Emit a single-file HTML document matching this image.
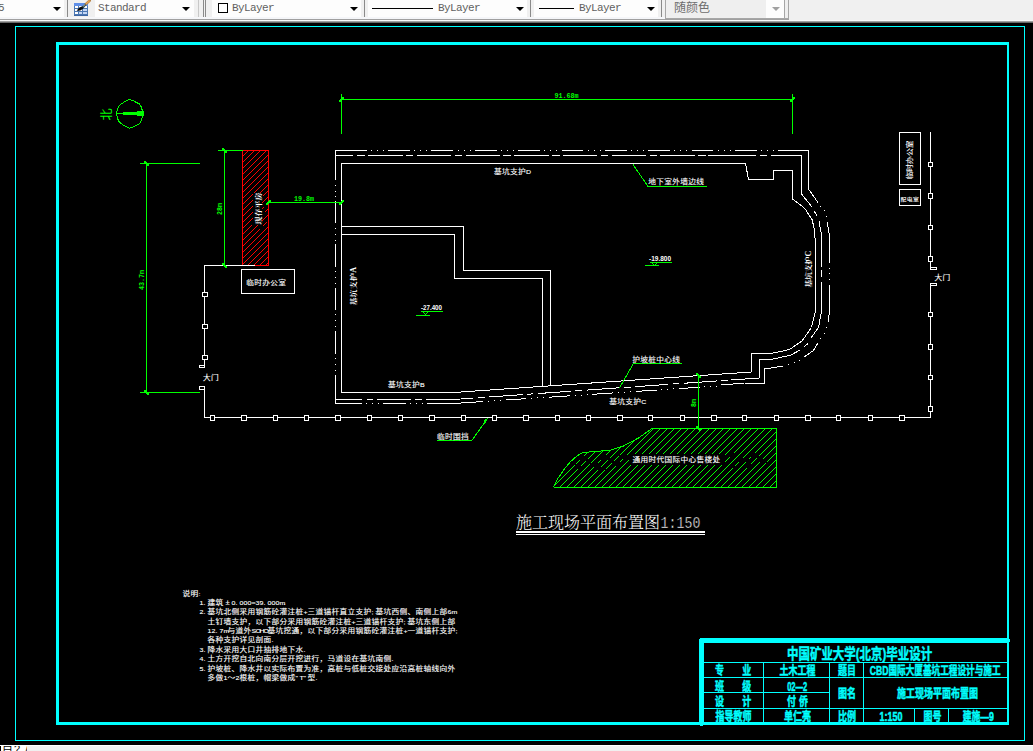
<!DOCTYPE html>
<html lang="zh-CN">
<head>
<meta charset="utf-8">
<title>施工现场平面布置图</title>
<style>
html,body{margin:0;padding:0}
body{width:1033px;height:751px;overflow:hidden;background:#f0f0f0;position:relative;
 font-family:"Liberation Sans","Noto Sans CJK SC",sans-serif}
#toolbar{position:absolute;left:0;top:0;width:1033px;height:23px;background:#f0f0f0;overflow:hidden}
#toolbar .edge{position:absolute;left:0;width:1033px;height:1px}
.combo{position:absolute;top:-3px;height:20px;background:#fdfdfd;box-sizing:border-box;overflow:hidden}
.combo .lbl{position:absolute;top:4px;font:11px/14px "Liberation Mono","Noto Sans CJK SC",monospace;color:#606060;letter-spacing:-.6px;white-space:nowrap}
.combo .arr{position:absolute;top:10px;width:0;height:0;border-left:4px solid transparent;border-right:4px solid transparent;border-top:4px solid #000}
.combo .smp{position:absolute;top:11px;height:1px;background:#000}
.combo .sw{position:absolute;top:6px;left:6px;width:8px;height:8px;border:1px solid #000;background:#fff}
.combo.dis{background:#efefef;border:1px solid #a6a6a6;border-top:0;top:-3px;height:22px}
.combo.dis .lbl{font:12px/14px "Liberation Sans","Noto Sans CJK SC",sans-serif;color:#6d6d6d;letter-spacing:0;top:4px}
.combo.dis .btn{position:absolute;right:3px;top:0;width:18px;height:21px;background:#fdfdfd;border-right:1px solid #a6a6a6}
.combo.dis .arr{border-top-color:#a0a0a0;border-left-width:4px;border-right-width:4px}
.sep{position:absolute;top:0;width:1px;height:17px;background:#8a8a8a}
.sep.l{background:#c8c8c8}
#icon{position:absolute;left:73px;top:0}
#cad{position:absolute;left:0;top:0;width:1033px;height:751px;display:block}
#status{position:absolute;left:0;top:745px;width:1033px;height:6px;background:#f0f0f0;border-top:1px solid #fff;box-sizing:border-box;overflow:hidden}
#status .cmd{position:absolute;left:0;top:0;width:27px;height:6px;background:#fff;overflow:hidden}
#status .cmd span{position:absolute;left:2px;top:-3px;font:11px/12px "Liberation Sans","Noto Sans CJK SC",sans-serif;color:#000;white-space:nowrap;letter-spacing:1px}
#status .cmd:before{content:"";position:absolute;left:0;top:0;width:1px;height:6px;background:#000}
svg .cy rect{fill:#0ff}
svg .wh rect{fill:#fff}
svg .gr rect{fill:#0f0}
svg .rd rect{fill:#f00}
svg .wh .sq,svg .wh .ln{fill:none;stroke:#fff;stroke-width:1}
svg .wh .sq{fill:#000}
svg .rd .mk,svg .gr .mk rect{fill:#000}
svg .pf{stroke:none}
svg .gr .sq,svg .gr .ln{fill:none;stroke:#0f0;stroke-width:1}
svg .rd .sq,svg .rd .ln{fill:none;stroke:#f00;stroke-width:1}
svg .gr .tk{fill:#0f0;stroke:none}
svg text{white-space:pre}
.tw{fill:#fff}
.t8{font:7.7px "Liberation Sans","Noto Sans CJK SC",sans-serif;stroke:#fff;stroke-width:.12px}
.t8 .a{font-size:7px}
.t6{font:5.8px "Liberation Sans","Noto Sans CJK SC",sans-serif}
.ts{font:bold 8px "Liberation Serif","Noto Serif CJK SC",serif}
.tn{font:bold 7.5px "Liberation Sans","Noto Sans CJK SC",sans-serif}
.tg{fill:#0f0;font:bold 7px "Liberation Mono","Noto Sans CJK SC",monospace}
.tg .nb{font:12px "Liberation Sans","Noto Sans CJK SC",sans-serif}
.ttl{font:16px "Liberation Mono","Noto Serif CJK SC",serif;font-weight:300}
.ttl .ttn{font-size:17px;font-weight:400;stroke:#000;stroke-width:.45px;paint-order:fill stroke}
.tc{fill:#0ff;stroke:#0ff;stroke-width:.45px;font-weight:bold;font-family:"Liberation Sans","Noto Sans CJK SC",sans-serif}
.c15{font-size:15px}
.c12{font-size:12px}
</style>
</head>
<body>
<div id="toolbar">
 <div class="edge" style="top:17px;height:2px;width:789px;background:#f5f6f9"></div>
 <div class="combo" style="left:0;width:64px"><span class="lbl" style="left:-2px">5</span><span class="arr" style="left:53px"></span></div>
 <div class="sep" style="left:67px"></div>
 <svg id="icon" width="18" height="17" viewBox="0 0 18 17" shape-rendering="crispEdges">
  <rect x="1" y="3" width="14" height="13" fill="#4b77b3"/><rect x="1" y="15" width="14" height="1" fill="#3c66a4"/>
  <rect x="1" y="3" width="14" height="3" fill="#5f8fe8"/>
  <g fill="#fff"><rect x="2" y="6" width="3" height="2"/><rect x="6" y="6" width="3" height="2"/><rect x="10" y="6" width="4" height="2"/>
  <rect x="2" y="9" width="3" height="2"/><rect x="6" y="9" width="3" height="2"/><rect x="10" y="9" width="4" height="2" fill="#c4d6f4"/>
  <rect x="2" y="12" width="3" height="2"/><rect x="6" y="12" width="3" height="2" fill="#c4d6f4"/><rect x="10" y="12" width="4" height="2" fill="#c4d6f4"/></g>
  <g shape-rendering="auto"><path d="M3.6 10.8 L6.3 7.4 L9.4 6.3 L10.4 8.6 L7.4 10.6 Z" fill="#0a0a0a"/><path d="M9.2 6.4 L12 3.6 L13.3 5 L10.4 8.4Z" fill="#38473f"/><path d="M10.2 6.2 L12.2 4.4" stroke="#e8f0ea" stroke-width=".7" fill="none"/><path d="M12 3.6 L15.8 0 L17.8 0 L17.8 1 L13.3 5Z" fill="#e9a552" stroke="#8a5a24" stroke-width=".5"/></g>
 </svg>
 <div class="combo" style="left:95px;width:99px"><span class="lbl" style="left:3px">Standard</span><span class="arr" style="left:87px"></span></div>
 <div class="sep l" style="left:198px"></div><div class="sep" style="left:203px"></div><div class="sep" style="left:205px"></div>
 <div class="combo" style="left:212px;width:149px"><span class="sw"></span><span class="lbl" style="left:20px">ByLayer</span><span class="arr" style="left:138px"></span></div>
 <div class="sep" style="left:364px"></div>
 <div class="combo" style="left:368px;width:159px"><span class="smp" style="left:4px;width:61px"></span><span class="lbl" style="left:70px">ByLayer</span><span class="arr" style="left:148px"></span></div>
 <div class="sep" style="left:530px"></div>
 <div class="combo" style="left:534px;width:124px"><span class="smp" style="left:5px;width:35px"></span><span class="lbl" style="left:45px">ByLayer</span><span class="arr" style="left:113px"></span></div>
 <div class="sep" style="left:661px"></div>
 <div class="combo dis" style="left:665px;width:124px"><span class="btn"></span><span class="lbl" style="left:8px">随颜色</span><span class="arr" style="left:106px"></span></div>
 <div class="edge" style="top:19px;width:789px;background:#a0a0a0"></div>
 <div class="edge" style="top:20px;background:#f8f8f8"></div>
 <div class="edge" style="top:21px;background:#a0a0a0"></div>
 <div class="edge" style="top:22px;background:#696969"></div>
</div>
<svg id="cad" width="1033" height="751" viewBox="0 0 1033 751" shape-rendering="crispEdges">
<rect x="0" y="23" width="1033" height="722" fill="#000"/>
<g class="cy">
<rect x="15" y="26" width="1010" height="1"/>
<rect x="15" y="740" width="1010" height="1"/>
<rect x="15" y="26" width="1" height="715"/>
<rect x="1024" y="26" width="1" height="715"/>
<rect x="56" y="42" width="953" height="3"/>
<rect x="56" y="722" width="953" height="3"/>
<rect x="56" y="42" width="3" height="683"/>
<rect x="1007" y="42" width="2" height="683"/>
<rect x="699" y="639" width="5" height="86"/>
<rect x="700" y="725" width="3" height="1"/>
<rect x="700" y="638" width="309" height="5"/>
<rect x="1009" y="639" width="1" height="3"/>
<rect x="703" y="662" width="305" height="1"/>
<rect x="703" y="677" width="305" height="1"/>
<rect x="703" y="708" width="305" height="1"/>
<rect x="703" y="692" width="127" height="1"/>
<rect x="763" y="662" width="1" height="61"/>
<rect x="829" y="662" width="1" height="61"/>
<rect x="863" y="662" width="1" height="61"/>
<rect x="914" y="708" width="1" height="15"/>
<rect x="948" y="708" width="1" height="15"/>
</g>
<g class="rd">
<rect class="sq" x="242.5" y="150.5" width="26" height="115"/>
<pattern id="hr" patternUnits="userSpaceOnUse" width="6" height="6"><rect x="0" y="2" width="1" height="1"/><rect x="1" y="1" width="1" height="1"/><rect x="2" y="0" width="1" height="1"/><rect x="3" y="5" width="1" height="1"/><rect x="4" y="4" width="1" height="1"/><rect x="5" y="3" width="1" height="1"/></pattern>
<rect class="pf" x="243" y="151" width="25" height="114" style="fill:url(#hr)"/>
<rect class="mk" x="253" y="193" width="9" height="32"/>
<rect class="mk" x="262" y="196" width="4" height="3"/>
<rect class="mk" x="263" y="204" width="5" height="3"/>
<rect class="mk" x="262" y="212" width="3" height="4"/>
<rect class="mk" x="264" y="219" width="4" height="3"/>
<rect class="mk" x="262" y="226" width="5" height="2"/>
<rect class="mk" x="250" y="222" width="3" height="3"/>
<rect class="mk" x="258" y="226" width="4" height="3"/>
</g>
<g class="wh">
<rect x="204" y="265" width="51" height="1"/>
<rect x="204" y="265" width="1" height="103"/>
<rect x="204" y="386" width="1" height="32"/>
<rect x="204" y="417" width="727" height="1"/>
<rect x="930" y="132" width="1" height="138"/>
<rect x="930" y="283" width="1" height="135"/>
<rect class="sq" x="199.5" y="365.5" width="5" height="2"/>
<rect class="sq" x="199.5" y="386.5" width="5" height="3"/>
<rect class="sq" x="930.5" y="267.5" width="6" height="2"/>
<rect class="sq" x="930.5" y="283.5" width="6" height="2"/>
<rect class="sq" x="202.5" y="292.5" width="5" height="4"/>
<rect class="sq" x="202.5" y="324.5" width="5" height="4"/>
<rect class="sq" x="202.5" y="355.5" width="5" height="4"/>
<rect class="sq" x="210.5" y="415.5" width="4" height="5"/>
<rect class="sq" x="241.5" y="415.5" width="5" height="5"/>
<rect class="sq" x="273.5" y="415.5" width="4" height="5"/>
<rect class="sq" x="304.5" y="415.5" width="4" height="5"/>
<rect class="sq" x="335.5" y="415.5" width="5" height="5"/>
<rect class="sq" x="367.5" y="415.5" width="4" height="5"/>
<rect class="sq" x="398.5" y="415.5" width="4" height="5"/>
<rect class="sq" x="429.5" y="415.5" width="5" height="5"/>
<rect class="sq" x="461.5" y="415.5" width="4" height="5"/>
<rect class="sq" x="492.5" y="415.5" width="4" height="5"/>
<rect class="sq" x="523.5" y="415.5" width="5" height="5"/>
<rect class="sq" x="555.5" y="415.5" width="4" height="5"/>
<rect class="sq" x="586.5" y="415.5" width="4" height="5"/>
<rect class="sq" x="617.5" y="415.5" width="5" height="5"/>
<rect class="sq" x="648.5" y="415.5" width="4" height="5"/>
<rect class="sq" x="680.5" y="415.5" width="4" height="5"/>
<rect class="sq" x="711.5" y="415.5" width="5" height="5"/>
<rect class="sq" x="742.5" y="415.5" width="4" height="5"/>
<rect class="sq" x="774.5" y="415.5" width="4" height="5"/>
<rect class="sq" x="805.5" y="415.5" width="5" height="5"/>
<rect class="sq" x="836.5" y="415.5" width="4" height="5"/>
<rect class="sq" x="868.5" y="415.5" width="4" height="5"/>
<rect class="sq" x="899.5" y="415.5" width="5" height="5"/>
<rect class="sq" x="928.5" y="162.5" width="4" height="4"/>
<rect class="sq" x="928.5" y="193.5" width="4" height="5"/>
<rect class="sq" x="928.5" y="225.5" width="4" height="4"/>
<rect class="sq" x="928.5" y="256.5" width="4" height="5"/>
<rect class="sq" x="928.5" y="312.5" width="4" height="4"/>
<rect class="sq" x="928.5" y="344.5" width="4" height="5"/>
<rect class="sq" x="928.5" y="375.5" width="4" height="4"/>
<rect class="sq" x="928.5" y="406.5" width="4" height="5"/>
<rect class="sq" x="241.5" y="269.5" width="53" height="24"/>
<rect class="sq" x="899.5" y="132.5" width="21" height="52"/>
<rect class="sq" x="899.5" y="189.5" width="21" height="16"/>
<rect x="516" y="531" width="189" height="2"/>
<rect x="516" y="534" width="189" height="1"/>
<polygon class="ln" points="341.5,163.5 745.5,163.5 748.5,179.5 773.5,179.5 773.5,170.5 792.5,170.5 792.5,199 802.5,206.5 805.5,209.5 812,219.5 814,227.5 815.5,242.5 815.5,311.5 811.5,327.5 802,341 789.5,349.5 773.5,353 751.5,353.5 751.5,372 453.5,392.5 341.5,392.5"/>
<polyline class="ln" points="341.5,226.5 463.5,226.5 463.5,270.5 550.5,270.5 550.5,385.5"/>
<polyline class="ln" points="341.5,234.5 454.5,234.5 454.5,278.5 542.5,278.5 542.5,386"/>
<rect x="335" y="150" width="31" height="1"/>
<rect x="345" y="150" width="22" height="1"/>
<rect x="371" y="150" width="1" height="1"/>
<rect x="377" y="150" width="1" height="1"/>
<rect x="383" y="150" width="1" height="1"/>
<rect x="388" y="150" width="22" height="1"/>
<rect x="414" y="150" width="1" height="1"/>
<rect x="420" y="150" width="1" height="1"/>
<rect x="426" y="150" width="1" height="1"/>
<rect x="431" y="150" width="22" height="1"/>
<rect x="458" y="150" width="1" height="1"/>
<rect x="464" y="150" width="1" height="1"/>
<rect x="470" y="150" width="1" height="1"/>
<rect x="475" y="150" width="22" height="1"/>
<rect x="501" y="150" width="1" height="1"/>
<rect x="507" y="150" width="1" height="1"/>
<rect x="513" y="150" width="1" height="1"/>
<rect x="518" y="150" width="22" height="1"/>
<rect x="544" y="150" width="1" height="1"/>
<rect x="550" y="150" width="1" height="1"/>
<rect x="556" y="150" width="1" height="1"/>
<rect x="562" y="150" width="21" height="1"/>
<rect x="588" y="150" width="1" height="1"/>
<rect x="594" y="150" width="1" height="1"/>
<rect x="600" y="150" width="1" height="1"/>
<rect x="605" y="150" width="22" height="1"/>
<rect x="631" y="150" width="1" height="1"/>
<rect x="637" y="150" width="1" height="1"/>
<rect x="643" y="150" width="1" height="1"/>
<rect x="648" y="150" width="22" height="1"/>
<rect x="674" y="150" width="1" height="1"/>
<rect x="680" y="150" width="1" height="1"/>
<rect x="686" y="150" width="1" height="1"/>
<rect x="692" y="150" width="21" height="1"/>
<rect x="718" y="150" width="1" height="1"/>
<rect x="724" y="150" width="1" height="1"/>
<rect x="730" y="150" width="1" height="1"/>
<rect x="735" y="150" width="22" height="1"/>
<rect x="761" y="150" width="1" height="1"/>
<rect x="767" y="150" width="1" height="1"/>
<rect x="773" y="150" width="1" height="1"/>
<rect x="778" y="150" width="31" height="1"/>
<polyline class="ln" points="808.5,150.5 808.5,189 818,202.5"/>
<rect x="820" y="206" width="1" height="1"/>
<rect x="824" y="210" width="1" height="1"/>
<rect x="826" y="216" width="1" height="1"/>
<polyline class="ln" points="827,222 829,232.5 829.5,242.5 829.5,262.5"/>
<rect x="829" y="268" width="1" height="1"/>
<rect x="829" y="273" width="1" height="1"/>
<rect x="829" y="279" width="1" height="1"/>
<polyline class="ln" points="829.5,284.5 829.5,311.5 828,322"/>
<rect x="826" y="327" width="1" height="1"/>
<rect x="824" y="333" width="1" height="1"/>
<rect x="820" y="338" width="1" height="1"/>
<polyline class="ln" points="818,343 813.5,350.5 804,357"/>
<rect x="799" y="360" width="1" height="1"/>
<rect x="794" y="362" width="1" height="1"/>
<rect x="788" y="364" width="1" height="1"/>
<polyline class="ln" points="783.5,366 764.5,369 764.5,383 744.5,383 721.5,385"/>
<rect x="716" y="386" width="1" height="1"/>
<rect x="710" y="386" width="1" height="1"/>
<rect x="704" y="386" width="1" height="1"/>
<polyline class="ln" points="453.5,403.5 483.1,401.54"/>
<rect x="488" y="401" width="1" height="1"/>
<rect x="494" y="400" width="1" height="1"/>
<rect x="500" y="400" width="1" height="1"/>
<polyline class="ln" points="505.5,400.06 526.5,398.67"/>
<rect x="531" y="398" width="1" height="1"/>
<rect x="537" y="397" width="1" height="1"/>
<rect x="543" y="397" width="1" height="1"/>
<polyline class="ln" points="548.85,397.19 569.85,395.8"/>
<rect x="575" y="395" width="1" height="1"/>
<rect x="581" y="395" width="1" height="1"/>
<rect x="587" y="394" width="1" height="1"/>
<polyline class="ln" points="592.2,394.32 613.2,392.93"/>
<rect x="618" y="392" width="1" height="1"/>
<rect x="624" y="392" width="1" height="1"/>
<rect x="630" y="391" width="1" height="1"/>
<polyline class="ln" points="635.55,391.45 656.55,390.06"/>
<rect x="661" y="389" width="1" height="1"/>
<rect x="667" y="389" width="1" height="1"/>
<rect x="673" y="388" width="1" height="1"/>
<polyline class="ln" points="678.9,388.58 699.9,387.19"/>
<rect x="335" y="403" width="27" height="1"/>
<rect x="366" y="403" width="1" height="1"/>
<rect x="372" y="403" width="1" height="1"/>
<rect x="378" y="403" width="1" height="1"/>
<rect x="383" y="403" width="23" height="1"/>
<rect x="410" y="403" width="1" height="1"/>
<rect x="416" y="403" width="1" height="1"/>
<rect x="422" y="403" width="1" height="1"/>
<rect x="427" y="403" width="27" height="1"/>
<rect x="335" y="150" width="1" height="30"/>
<rect x="335" y="201" width="1" height="22"/>
<rect x="335" y="244" width="1" height="23"/>
<rect x="335" y="288" width="1" height="22"/>
<rect x="335" y="331" width="1" height="23"/>
<rect x="335" y="185" width="1" height="1"/>
<rect x="335" y="191" width="1" height="1"/>
<rect x="335" y="196" width="1" height="1"/>
<rect x="335" y="228" width="1" height="1"/>
<rect x="335" y="234" width="1" height="1"/>
<rect x="335" y="240" width="1" height="1"/>
<rect x="335" y="271" width="1" height="1"/>
<rect x="335" y="277" width="1" height="1"/>
<rect x="335" y="283" width="1" height="1"/>
<rect x="335" y="314" width="1" height="1"/>
<rect x="335" y="320" width="1" height="1"/>
<rect x="335" y="326" width="1" height="1"/>
<rect x="335" y="358" width="1" height="1"/>
<rect x="335" y="364" width="1" height="1"/>
<rect x="335" y="370" width="1" height="1"/>
<rect x="335" y="375" width="1" height="29"/>
<rect x="335" y="155" width="18" height="1"/>
<rect x="357" y="155" width="8" height="1"/>
<rect x="368" y="155" width="35" height="1"/>
<rect x="406" y="155" width="7" height="1"/>
<rect x="417" y="155" width="34" height="1"/>
<rect x="455" y="155" width="7" height="1"/>
<rect x="466" y="155" width="34" height="1"/>
<rect x="503" y="155" width="8" height="1"/>
<rect x="514" y="155" width="35" height="1"/>
<rect x="552" y="155" width="8" height="1"/>
<rect x="563" y="155" width="34" height="1"/>
<rect x="601" y="155" width="7" height="1"/>
<rect x="612" y="155" width="34" height="1"/>
<rect x="650" y="155" width="7" height="1"/>
<rect x="660" y="155" width="35" height="1"/>
<rect x="698" y="155" width="8" height="1"/>
<rect x="708" y="155" width="48" height="1"/>
<rect x="760" y="155" width="7" height="1"/>
<rect x="771" y="155" width="31" height="1"/>
<polyline class="ln" points="801.5,155.5 801.5,194 812,207"/>
<polyline class="ln" points="814.5,211.5 817,216"/>
<polyline class="ln" points="819,221.5 821,231.5 821.5,242.5 821.5,266.5"/>
<rect x="821" y="270" width="1" height="7"/>
<polyline class="ln" points="821.5,281.5 821.5,311.5 818.5,327.5 810.5,338.5"/>
<polyline class="ln" points="808,343.5 804,347"/>
<polyline class="ln" points="800,350 791,355 773.5,359 759.5,360 759.5,378 731,380"/>
<polyline class="ln" points="453.5,399.5 472.9,398.13"/>
<polyline class="ln" points="478.3,397.75 484.5,397.31"/>
<polyline class="ln" points="489.5,396.96 522.8,394.61"/>
<polyline class="ln" points="527,394.32 533.5,393.86"/>
<polyline class="ln" points="538,393.54 571.3,391.2"/>
<polyline class="ln" points="575.5,390.9 582,390.44"/>
<polyline class="ln" points="586.5,390.12 619.8,387.78"/>
<polyline class="ln" points="624,387.48 630.5,387.02"/>
<polyline class="ln" points="635,386.7 668.3,384.36"/>
<polyline class="ln" points="672.5,384.06 679,383.6"/>
<polyline class="ln" points="683.5,383.29 716.8,380.94"/>
<polyline class="ln" points="721,380.64 727.5,380.18"/>
<rect x="335" y="399" width="27" height="1"/>
<rect x="367" y="399" width="6" height="1"/>
<rect x="377" y="399" width="34" height="1"/>
<rect x="415" y="399" width="7" height="1"/>
<rect x="426" y="399" width="28" height="1"/>
</g>
<g class="gr">
<polyline class="ln" points="116.5,113.5 117.5,109 119,106 121,104 123.5,102.5 127,100.5 129.5,99.5 133,100.5 136.5,102.5 139.5,104 141,106.5 142,109.5 142.5,113.5 142,118.1 141,121.1 139.5,123.6 136.5,125.1 133,127.1 129.5,128.1 127,127.1 123.5,125.1 121,123.6 119,121.6 117.5,118.6 116.5,114.1"/>
<rect x="116" y="113" width="28" height="1"/>
<rect x="123" y="112" width="21" height="3"/>
<rect x="137" y="111" width="7" height="5"/>
<rect x="341" y="99" width="452" height="1"/>
<rect x="341" y="94" width="1" height="40"/>
<rect x="792" y="94" width="1" height="40"/>
<path class="tk" d="M338.4 101 l4.6 -4.6 l1.6 1.6 l-4.6 4.6z"/>
<path class="tk" d="M789.4 101 l4.6 -4.6 l1.6 1.6 l-4.6 4.6z"/>
<rect x="146" y="163" width="1" height="230"/>
<rect x="140" y="163" width="60" height="1"/>
<rect x="140" y="392" width="60" height="1"/>
<path class="tk" d="M143.4 162 l1.6 -1.6 l4.6 4.6 l-1.6 1.6z"/>
<path class="tk" d="M143.4 391 l1.6 -1.6 l4.6 4.6 l-1.6 1.6z"/>
<rect x="224" y="150" width="1" height="116"/>
<rect x="218" y="150" width="25" height="1"/>
<path class="tk" d="M221.4 149 l1.6 -1.6 l4.6 4.6 l-1.6 1.6z"/>
<path class="tk" d="M221.4 264 l1.6 -1.6 l4.6 4.6 l-1.6 1.6z"/>
<rect x="268" y="202" width="74" height="1"/>
<path class="tk" d="M265.4 204 l4.6 -4.6 l1.6 1.6 l-4.6 4.6z"/>
<path class="tk" d="M338.4 204 l4.6 -4.6 l1.6 1.6 l-4.6 4.6z"/>
<rect x="698" y="374" width="1" height="56"/>
<path class="tk" d="M695.4 374 l1.6 -1.6 l4.6 4.6 l-1.6 1.6z"/>
<path class="tk" d="M695.4 427 l1.6 -1.6 l4.6 4.6 l-1.6 1.6z"/>
<polyline class="ln" points="633,164.5 648,186.5"/>
<rect x="648" y="186" width="59" height="1"/>
<polyline class="ln" points="619.5,388 633.5,363.5"/>
<rect x="633" y="363" width="49" height="1"/>
<polyline class="ln" points="487.5,418.5 471.5,441"/>
<rect x="437" y="440" width="35" height="1"/>
<path class="tk" d="M487.5 418 l-4.5 3 l2.5 2z"/>
<rect x="650" y="262" width="22" height="1"/>
<rect x="645" y="265" width="14" height="1"/>
<polyline class="ln" points="651.5,262.5 654.5,265.5 657.5,262.5"/>
<rect x="421" y="311" width="22" height="1"/>
<rect x="416" y="315" width="14" height="1"/>
<polyline class="ln" points="422.5,311.5 425.5,314.5 428.5,311.5"/>
<pattern id="hg" patternUnits="userSpaceOnUse" width="7" height="7"><rect x="0" y="3" width="1" height="1"/><rect x="1" y="2" width="1" height="1"/><rect x="2" y="1" width="1" height="1"/><rect x="3" y="0" width="1" height="1"/><rect x="4" y="6" width="1" height="1"/><rect x="5" y="5" width="1" height="1"/><rect x="6" y="4" width="1" height="1"/></pattern>
<polygon class="pf" fill="url(#hg)" points="553.5,487.5 556.5,480.5 561,474 565.5,467.5 571.5,460.5 577,456 582.5,452.5 596.5,451.5 611,450 623.5,446 638.5,438 652,428.5 776.5,428.5 776.5,487.5 553.5,487.5"/>
<g class="mk"><rect x="629" y="454" width="96" height="11"/><rect x="567" y="461" width="9" height="4"/><rect x="580" y="456" width="8" height="5"/><rect x="590" y="463" width="10" height="4"/><rect x="601" y="455" width="9" height="5"/><rect x="612" y="461" width="8" height="5"/><rect x="575" y="466" width="7" height="3"/><rect x="598" y="467" width="8" height="3"/><rect x="619" y="455" width="8" height="4"/><rect x="728" y="453" width="9" height="4"/><rect x="739" y="458" width="10" height="4"/><rect x="751" y="453" width="8" height="5"/><rect x="744" y="464" width="9" height="4"/><rect x="760" y="459" width="7" height="4"/><rect x="733" y="466" width="6" height="3"/></g>
<polyline class="ln" points="553.5,487.5 556.5,480.5 561,474 565.5,467.5 571.5,460.5 577,456 582.5,452.5 596.5,451.5 611,450 623.5,446 638.5,438 652,428.5 776.5,428.5 776.5,487.5 553.5,487.5"/>
</g><g class="tw t8">
<text transform="translate(0 174.4) scale(1 .88)" x="494 502 510 518 526" y="0">基坑支护<tspan class="a">D</tspan></text>
<text transform="translate(0 387.4) scale(1 .88)" x="388 396 404 412 420" y="0">基坑支护<tspan class="a">B</tspan></text>
<text transform="translate(0 404.2) scale(1 .88)" x="609.2 617.2 625.2 633.2 641.2" y="0">基坑支护<tspan class="a">C</tspan></text>
<text transform="translate(0 184) scale(1 .88)" x="648.2 656.2 664.2 672.2 680.2 688.2 696.2" y="0">地下室外墙边线</text>
<text transform="translate(0 361.8) scale(1 .88)" x="632.3 640.3 648.3 656.3 664.3 672.3" y="0">护坡桩中心线</text>
<text transform="translate(0 439.2) scale(1 .88)" x="437 445 453 461" y="0">临时围挡</text>
<text transform="translate(0 285.2) scale(1 .88)" x="246.2 254.2 262.2 270.2 278.2" y="0">临时办公室</text>
<text transform="translate(0 380.2) scale(1 .88)" x="203 211" y="0">大门</text>
<text transform="translate(0 280.2) scale(1 .88)" x="934.4 942.4" y="0">大门</text>
<text transform="translate(0 462.4) scale(1 .88)" x="632.5 640.5 648.5 656.5 664.5 672.5 680.5 688.5 696.5 704.5 712.5" y="0">通用时代国际中心售楼处</text>
<text transform="translate(912.4 179.5) rotate(-90) scale(1 .9)" x="0 7.8 15.6 23.4 31.2" y="0">临时办公室</text>
<text class="t6" transform="translate(0 200.8) scale(1 .88)" x="900.5 906.7 912.9" y="0">配电室</text>
</g>
<g class="tw ts">
<text transform="translate(261 224.5) rotate(-90) scale(1 .9)" x="0 8 16 24" y="0">现存平房</text>
<text transform="translate(356 305.6) rotate(-90) scale(1 .9)" x="0 8.2 16.4 24.6 32.8" y="0">基坑支护<tspan class="a">A</tspan></text>
<text transform="translate(811.4 287.8) rotate(-90) scale(1 .9)" x="0 7.8 15.6 23.4 31.2" y="0">基坑支护<tspan class="a">C</tspan></text>
</g>
<g class="tw tn">
<text x="649" y="261" textLength="22" lengthAdjust="spacingAndGlyphs">-19.800</text>
<text x="421" y="310.4" textLength="21" lengthAdjust="spacingAndGlyphs">-27.400</text>
</g>
<g class="tg">
<text x="554.5" y="98" textLength="24" lengthAdjust="spacingAndGlyphs">91.68m</text>
<text x="294" y="200.6" textLength="20" lengthAdjust="spacingAndGlyphs">19.8m</text>
<text transform="translate(222.4 215) rotate(-90)" textLength="12" lengthAdjust="spacingAndGlyphs">28m</text>
<text transform="translate(144.4 290) rotate(-90)" textLength="20" lengthAdjust="spacingAndGlyphs">43.7m</text>
<text transform="translate(695.6 407) rotate(-90)" textLength="8" lengthAdjust="spacingAndGlyphs">8m</text>
<text class="nb" transform="translate(111 120.5) rotate(-90)">北</text>
</g>
<g class="tw ttl">
<text x="516 532 548 564 580 596 612 628 644" y="528">施工现场平面布置图</text>
<text class="ttn" transform="translate(660.6 528) scale(0.78 1)">1:150</text>
</g>
<g class="tw t8 notes">
<text transform="translate(0 595.6) scale(1 .88)" x="182.5 190.5 198.5" y="0">说明<tspan class="a">:</tspan></text>
<text transform="translate(0 604.8) scale(1 .88)" x="199.5 203.5" y="0"><tspan class="a">1.</tspan></text>
<text transform="translate(0 604.8) scale(1 .88)" x="207.4 215.4 225.4 231.4 235.4 239.4 243.4 247.4 251.4 255.4 259.4 263.4 267.4 271.4 275.4 279.4 283.4" y="0">建筑±<tspan class="a">0.000=39.000m.</tspan></text>
<text transform="translate(0 614.4) scale(1 .88)" x="199.5 203.5" y="0"><tspan class="a">2.</tspan></text>
<text transform="translate(0 614.4) scale(1 .88)" x="207.4 215.4 223.4 231.4 239.4 247.4 255.4 263.4 271.4 279.4 287.4 295.4 303.4 307.4 315.4 323.4 331.4 339.4 347.4 355.4 363.4 371.4 375.4 383.4 391.4 399.4 407.4 415.4 423.4 431.4 439.4 447.4 451.4" y="0">基坑北侧采用钢筋砼灌注桩<tspan class="a">+</tspan>三道锚杆直立支护<tspan class="a">;</tspan>基坑西侧、南侧上部<tspan class="a">6m</tspan></text>
<text transform="translate(0 623.6) scale(1 .88)" x="207.4 215.4 223.4 231.4 239.4 247.4 255.4 263.4 271.4 279.4 287.4 295.4 303.4 311.4 319.4 327.4 335.4 343.4 351.4 355.4 363.4 371.4 379.4 387.4 395.4 403.4 407.4 415.4 423.4 431.4 439.4 447.4" y="0">土钉墙支护，以下部分采用钢筋砼灌注桩<tspan class="a">+</tspan>三道锚杆支护<tspan class="a">;</tspan>基坑东侧上部</text>
<text transform="translate(0 633) scale(1 .88)" x="207.4 211.4 215.4 219.4 223.4 227.4 235.4 243.4 251.4 255.4 259.4 263.4 267.4 275.4 283.4 291.4 299.4 307.4 315.4 323.4 331.4 339.4 347.4 355.4 363.4 371.4 379.4 387.4 395.4 403.4 407.4 415.4 423.4 431.4 439.4 447.4 455.4" y="0"><tspan class="a">12.7m</tspan>与道外<tspan class="a">SOHO</tspan>基坑挖通，以下部分采用钢筋砼灌注桩<tspan class="a">+</tspan>一道锚杆支护<tspan class="a">;</tspan></text>
<text transform="translate(0 642.4) scale(1 .88)" x="207.4 215.4 223.4 231.4 239.4 247.4 255.4 263.4 271.4" y="0">各种支护详见剖面<tspan class="a">.</tspan></text>
<text transform="translate(0 651.8) scale(1 .88)" x="199.5 203.5" y="0"><tspan class="a">3.</tspan></text>
<text transform="translate(0 651.8) scale(1 .88)" x="207.4 215.4 223.4 231.4 239.4 247.4 255.4 263.4 271.4 279.4 287.4 295.4 303.4" y="0">降水采用大口井抽排地下水<tspan class="a">.</tspan></text>
<text transform="translate(0 661.4) scale(1 .88)" x="199.5 203.5" y="0"><tspan class="a">4.</tspan></text>
<text transform="translate(0 661.4) scale(1 .88)" x="207.4 215.4 223.4 231.4 239.4 247.4 255.4 263.4 271.4 279.4 287.4 295.4 303.4 311.4 319.4 327.4 335.4 343.4 351.4 359.4 367.4 375.4 383.4 391.4" y="0">土方开挖自北向南分层开挖进行，马道设在基坑南侧<tspan class="a">.</tspan></text>
<text transform="translate(0 670.6) scale(1 .88)" x="199.5 203.5" y="0"><tspan class="a">5.</tspan></text>
<text transform="translate(0 670.6) scale(1 .88)" x="207.4 215.4 223.4 231.4 239.4 247.4 255.4 263.4 271.4 279.4 287.4 295.4 303.4 311.4 319.4 327.4 335.4 343.4 351.4 359.4 367.4 375.4 383.4 391.4 399.4 407.4 415.4 423.4 431.4 439.4 447.4" y="0">护坡桩、降水井以实际布置为准，高桩与低桩交接处应沿高桩轴线向外</text>
<text transform="translate(0 680.2) scale(1 .88)" x="207.4 215.4 223.4 227.4 235.4 239.4 247.4 255.4 263.4 271.4 279.4 287.4 295.4 299.4 303.4 307.4 315.4" y="0">多做<tspan class="a">1</tspan>～<tspan class="a">2</tspan>根桩，帽梁做成<tspan class="a">&quot;T&quot;</tspan>型<tspan class="a">.</tspan></text>
</g>
<g class="tc">
<text class="c15" transform="translate(859.6 659) scale(0.765 1)" text-anchor="middle">中国矿业大学(北京)毕业设计</text>
<g class="c12">
<text transform="translate(715 675.4) scale(0.75 1)">专<tspan dx="24.5">业</tspan></text>
<text transform="translate(715 690.6) scale(0.75 1)">班<tspan dx="24.5">级</tspan></text>
<text transform="translate(715 706) scale(0.75 1)">设<tspan dx="24.5">计</tspan></text>
<text transform="translate(715.5 720.8) scale(0.75 1)">指导教师</text>
<text transform="translate(797.5 675.4) scale(0.75 1)" text-anchor="middle">土木工程</text>
<text transform="translate(797.2 690.6) scale(0.75 1)" text-anchor="middle" textLength="26.8" lengthAdjust="spacingAndGlyphs">02—2</text>
<text transform="translate(797.5 706) scale(0.75 1)" text-anchor="middle">付<tspan dx="4">侨</tspan></text>
<text transform="translate(797.5 720.8) scale(0.75 1)" text-anchor="middle">单仁亮</text>
<text transform="translate(847 675.4) scale(0.75 1)" text-anchor="middle">题目</text>
<text transform="translate(847 698) scale(0.75 1)" text-anchor="middle">图名</text>
<text transform="translate(847 720.8) scale(0.75 1)" text-anchor="middle">比例</text>
<text transform="translate(935.2 675.4) scale(0.75 1)" text-anchor="middle" textLength="174.4" lengthAdjust="spacingAndGlyphs">CBD国际大厦基坑工程设计与施工</text>
<text transform="translate(937.5 698) scale(0.75 1)" text-anchor="middle">施工现场平面布置图</text>
<text transform="translate(891 720.8) scale(0.75 1)" text-anchor="middle">1:150</text>
<text transform="translate(932.5 720.8) scale(0.75 1)" text-anchor="middle">图号</text>
<text transform="translate(978.4 720.8) scale(0.75 1)" text-anchor="middle" textLength="41.6" lengthAdjust="spacingAndGlyphs">建施—9</text>
</g>
</g>
</svg>
<div id="status"><div class="cmd"><span>目? /</span></div></div>
</body>
</html>
